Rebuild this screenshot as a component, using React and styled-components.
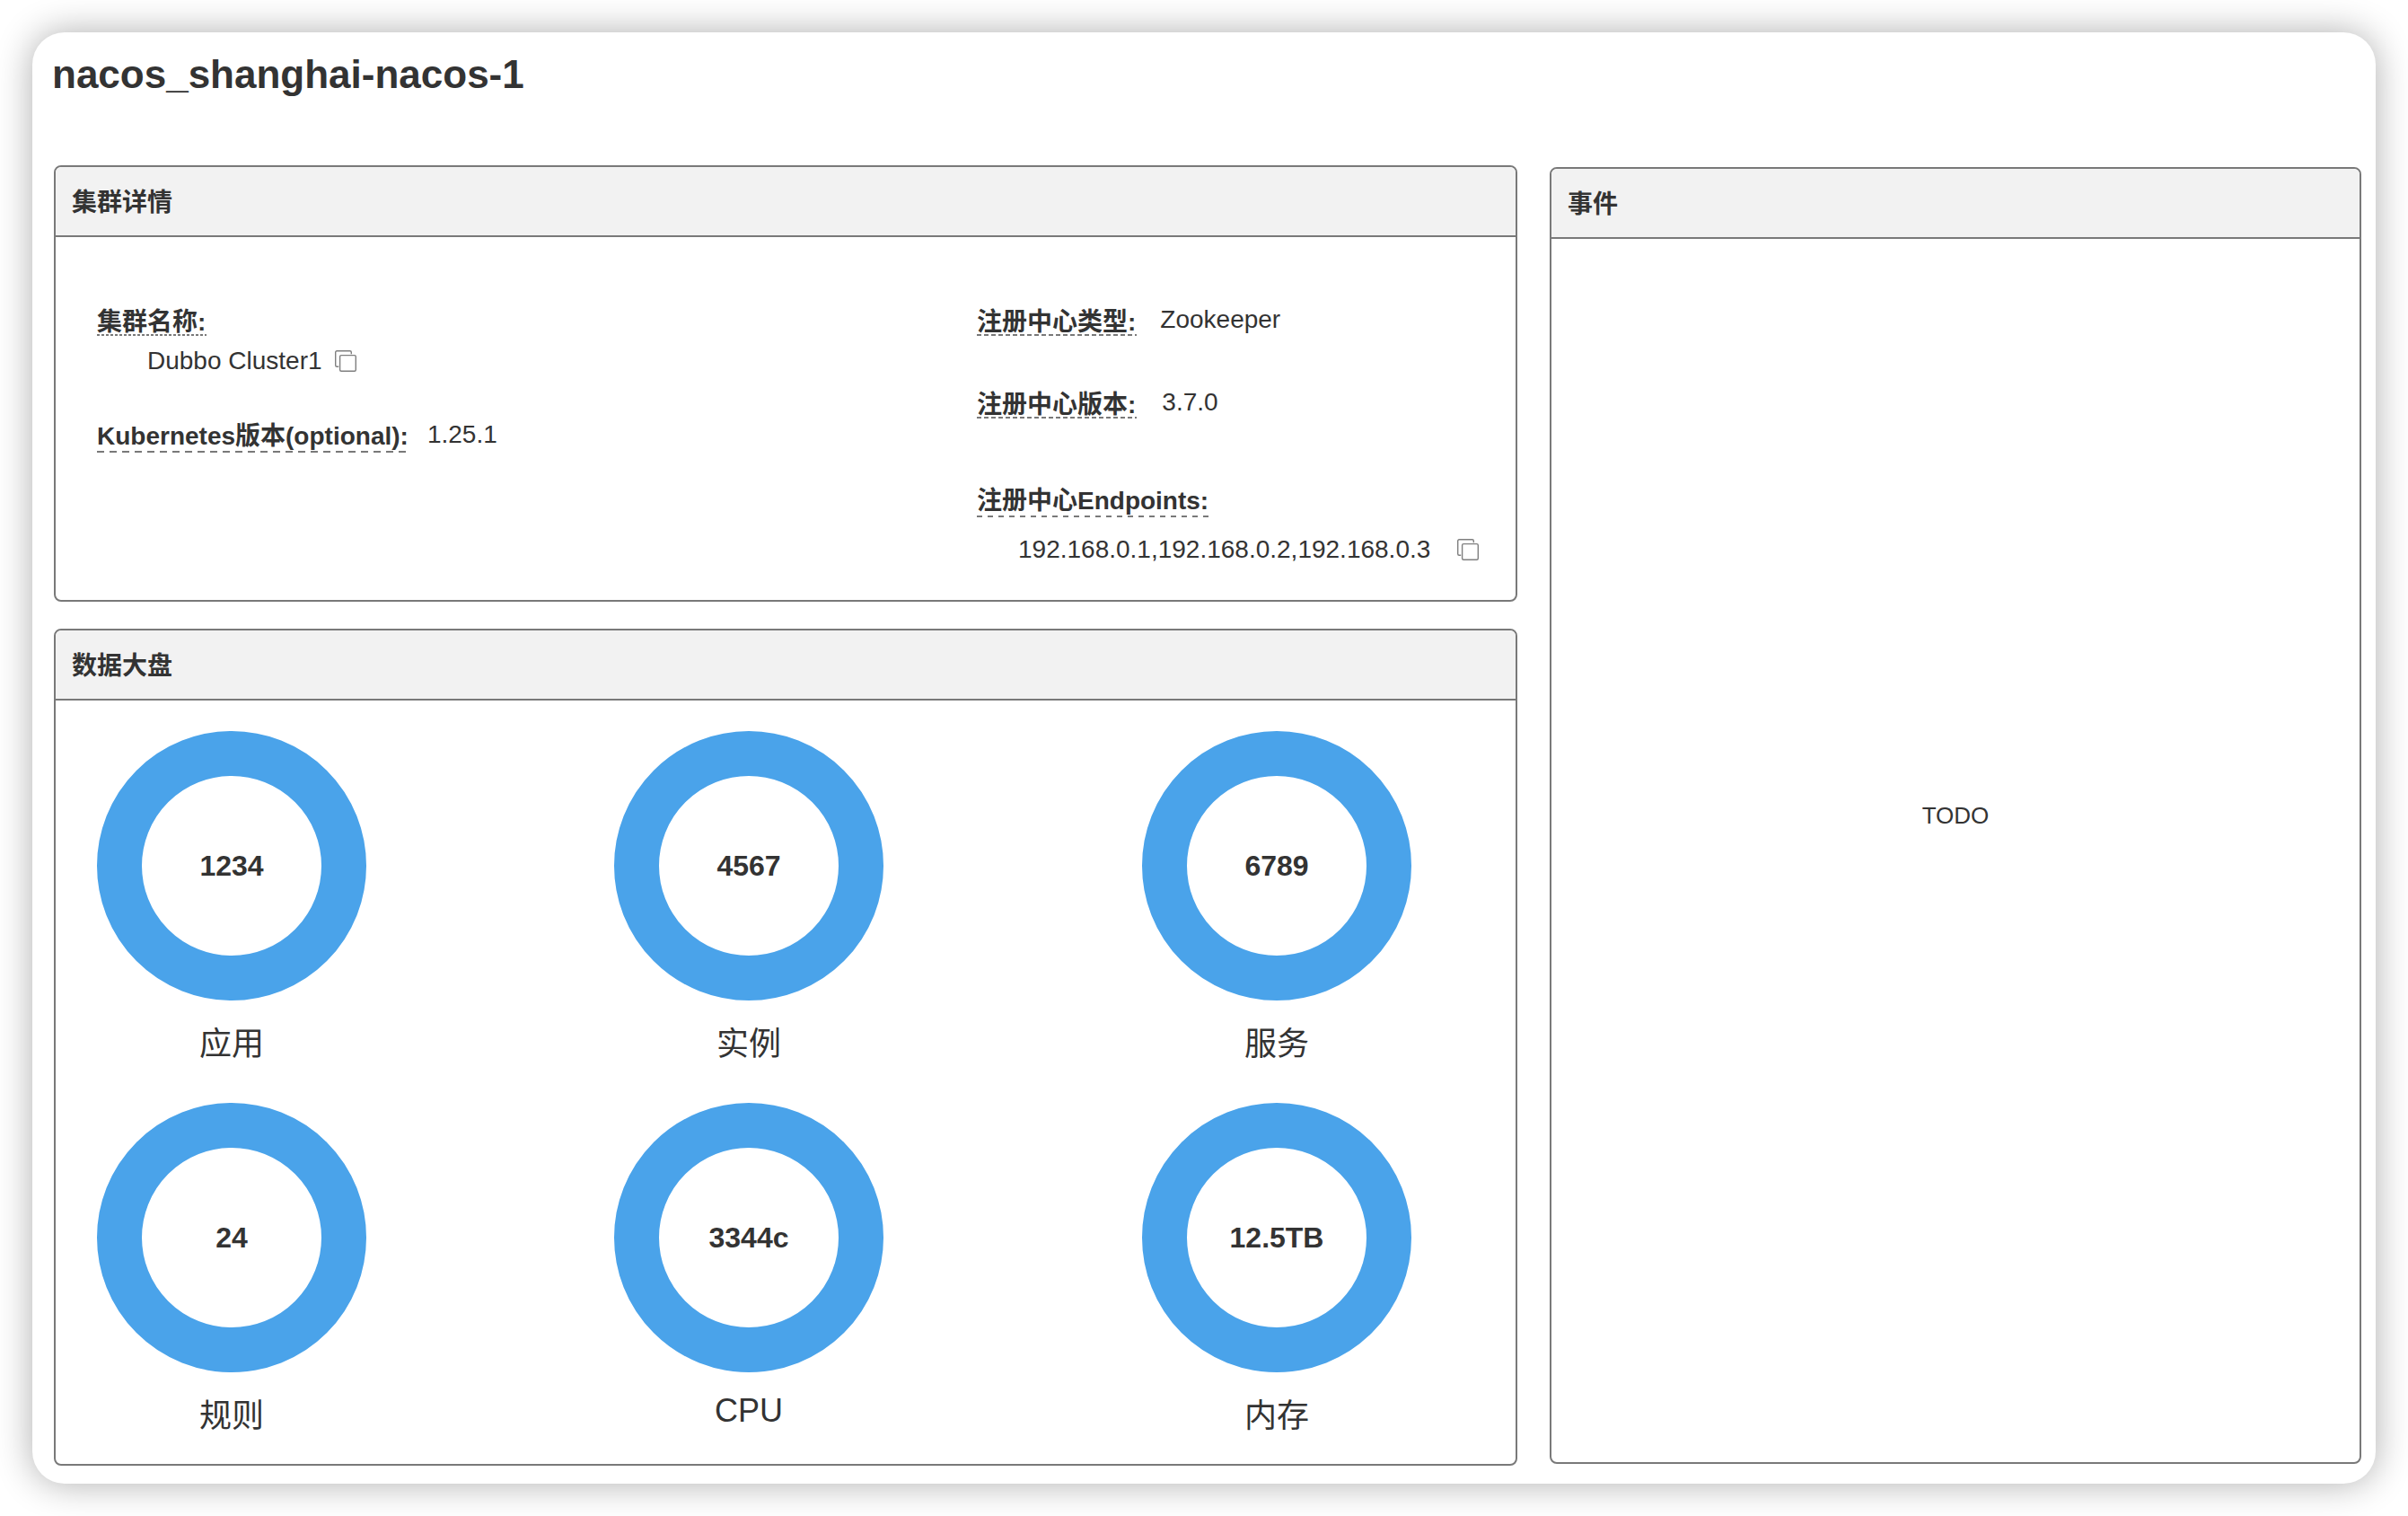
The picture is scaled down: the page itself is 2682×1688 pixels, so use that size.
import React from 'react';
import styled, { createGlobalStyle, css } from 'styled-components';

const line = '#797979';

const GlobalStyle = createGlobalStyle`
  *, *::before, *::after { box-sizing: border-box; }
  body {
    margin: 0;
    background: #fff;
    color: #333;
    font-family: "Liberation Sans", "Noto Sans CJK SC", sans-serif;
    font-size: 28px;
  }
`;

const Page = styled.div`
  min-height: 100vh;
  padding: 36px;
  display: flex;
`;

const Card = styled.main`
  flex: 1;
  min-width: 0;
  display: flex;
  flex-direction: column;
  border-radius: 36px;
  background: #fff;
  box-shadow: 0 0 40px rgba(0, 0, 0, 0.32);
`;

const Title = styled.h1`
  margin: 0;
  padding: 20px 22px 74px;
  font-size: 44px;
  line-height: 54px;
`;

const Columns = styled.div`
  flex: 1;
  display: grid;
  grid-template-columns: 815fr 452fr;
  gap: 36px;
  padding: 0 16px 20px 24px;
`;

const MainColumn = styled.div`
  display: flex;
  flex-direction: column;
  gap: 30px;
  min-width: 0;
`;

const SideColumn = styled.div`
  display: flex;
  padding: 2px 0;
  min-width: 0;
`;

const Panel = styled.section`
  flex: ${(p) => (p.$grow ? 1 : 'none')};
  display: flex;
  flex-direction: column;
  border: 2px solid ${line};
  border-radius: 8px;
  overflow: hidden;
`;

const PanelTitle = styled.h2`
  margin: 0;
  padding: 22px 18px 18px;
  border-bottom: 2px solid ${line};
  background: #f2f2f2;
  font-size: 28px;
  line-height: 36px;
`;

const DetailsBody = styled.div`
  display: grid;
  grid-template-columns: 7fr 4fr;
  padding: 74px 40px 38px 46px;
`;

const FieldList = styled.dl`
  margin: 0;
  min-width: 0;
`;

const Field = styled.div`
  display: flex;
  flex-direction: ${(p) => (p.$stacked ? 'column' : 'row')};
  align-items: flex-start;
  gap: ${(p) => p.$gap}px;
  margin-top: ${(p) => p.$space || 0}px;
`;

const FieldLabel = styled.dt`
  padding-top: ${(p) => (p.$mixed ? 4 : 8)}px;

  span {
    display: block;
    padding: 0 1px 2px 0;
    font-weight: bold;
    line-height: ${(p) => (p.$mixed ? 32 : 26)}px;
    white-space: nowrap;
    ${({ $dash, $gap }) => css`
      background: repeating-linear-gradient(
          90deg,
          ${line} 0 ${$dash}px,
          transparent ${$dash}px ${$dash + $gap}px
        )
        left bottom / 100% 2px no-repeat;
    `}
  }
`;

const FieldValue = styled.dd`
  display: flex;
  align-items: center;
  gap: ${(p) => p.$gap || 0}px;
  margin: 0;
  padding-left: ${(p) => p.$indent || 0}px;
  line-height: 36px;
  white-space: nowrap;
`;

const CopyButton = styled.button`
  display: flex;
  padding: 0;
  border: 0;
  background: none;
  color: #7f7f7f;
  cursor: pointer;
`;

const StatGrid = styled.div`
  display: grid;
  grid-template-columns: 48fr 49fr 25fr;
  align-items: start;
  row-gap: 38px;
  padding: 34px 116px 26px 46px;
`;

const Stat = styled.figure`
  display: flex;
  flex-direction: column;
  align-items: center;
  gap: 22px;
  width: 300px;
  margin: 0;
`;

const Ring = styled.div`
  display: flex;
  align-items: center;
  justify-content: center;
  width: 300px;
  height: 300px;
  border: 50px solid #4aa3ea;
  border-radius: 50%;
  font-size: 32px;
  font-weight: bold;
`;

const StatLabel = styled.figcaption`
  font-size: 36px;
  line-height: ${(p) => (p.$latin ? 42 : 54)}px;
`;

const EventsBody = styled.div`
  flex: 1;
  display: flex;
  align-items: center;
  justify-content: center;
  padding-bottom: 78px;
  font-size: 26px;
`;

const stats = [
  { value: '1234', label: '应用' },
  { value: '4567', label: '实例' },
  { value: '6789', label: '服务' },
  { value: '24', label: '规则' },
  { value: '3344c', label: 'CPU', latin: true },
  { value: '12.5TB', label: '内存' },
];

function Copy({ label }) {
  return (
    <CopyButton type="button" aria-label={label}>
      <svg width="24" height="24" viewBox="0 0 24 24" fill="none" stroke="currentColor" strokeWidth="1.4">
        <path d="M4.2 18.3H2.2A1.5 1.5 0 0 1 .7 16.8V2.2A1.5 1.5 0 0 1 2.2.7H16.8A1.5 1.5 0 0 1 18.3 2.2V4.2" />
        <rect x="5.6" y="5.6" width="17.7" height="17.7" rx="1.5" />
      </svg>
    </CopyButton>
  );
}

export default function App() {
  return (
    <Page>
      <GlobalStyle />
      <Card>
        <Title>nacos_shanghai-nacos-1</Title>
        <Columns>
          <MainColumn>
            <Panel>
              <PanelTitle>集群详情</PanelTitle>
              <DetailsBody>
                <FieldList>
                  <Field $stacked $gap={10}>
                    <FieldLabel $dash={3} $gap={2}><span>集群名称:</span></FieldLabel>
                    <FieldValue $indent={56} $gap={14}>
                      Dubbo Cluster1
                      <Copy label="复制集群名称" />
                    </FieldValue>
                  </Field>
                  <Field $gap={20} $space={46}>
                    <FieldLabel $mixed $dash={8} $gap={6}><span>Kubernetes版本(optional):</span></FieldLabel>
                    <FieldValue>1.25.1</FieldValue>
                  </Field>
                </FieldList>
                <FieldList>
                  <Field $gap={26}>
                    <FieldLabel $dash={5} $gap={3}><span>注册中心类型:</span></FieldLabel>
                    <FieldValue>Zookeeper</FieldValue>
                  </Field>
                  <Field $gap={28} $space={56}>
                    <FieldLabel $dash={5} $gap={3}><span>注册中心版本:</span></FieldLabel>
                    <FieldValue>3.7.0</FieldValue>
                  </Field>
                  <Field $stacked $gap={18} $space={72}>
                    <FieldLabel $mixed $dash={6} $gap={6}><span>注册中心Endpoints:</span></FieldLabel>
                    <FieldValue $indent={46} $gap={30}>
                      192.168.0.1,192.168.0.2,192.168.0.3
                      <Copy label="复制注册中心Endpoints" />
                    </FieldValue>
                  </Field>
                </FieldList>
              </DetailsBody>
            </Panel>
            <Panel $grow>
              <PanelTitle>数据大盘</PanelTitle>
              <StatGrid>
                {stats.map((s) => (
                  <Stat key={s.label}>
                    <Ring>{s.value}</Ring>
                    <StatLabel $latin={s.latin}>{s.label}</StatLabel>
                  </Stat>
                ))}
              </StatGrid>
            </Panel>
          </MainColumn>
          <SideColumn>
            <Panel $grow>
              <PanelTitle>事件</PanelTitle>
              <EventsBody>TODO</EventsBody>
            </Panel>
          </SideColumn>
        </Columns>
      </Card>
    </Page>
  );
}
